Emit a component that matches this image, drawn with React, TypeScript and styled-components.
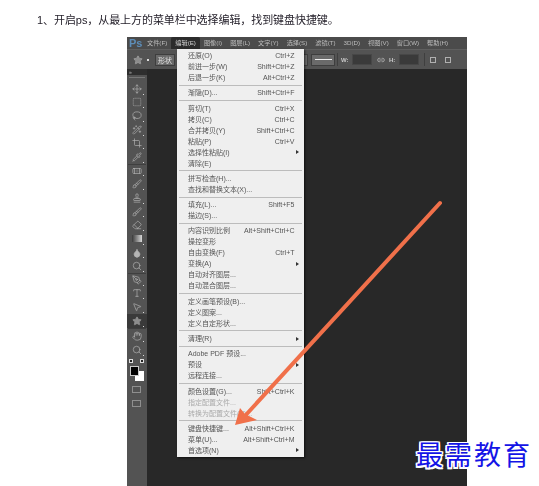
import React from "react";
import styled, { createGlobalStyle } from "styled-components";
import {
  Bandage,
  Brush,
  Crop,
  Droplet,
  Eraser,
  Hand,
  Lasso,
  Link2,
  MousePointer2,
  Move,
  PenTool,
  Pipette,
  Search,
  SquareDashed,
  Stamp,
  Star,
  Wand2,
  Type,
} from "lucide-react";

const GlobalStyle = createGlobalStyle`
  html, body {
    margin: 0;
    padding: 0;
    background: #fff;
  }
`;

const Page = styled.div`
  position: relative;
  width: 539px;
  height: 486px;
  overflow: hidden;
  background: #fff;
  font-family: "Liberation Sans", "Noto Sans CJK SC", sans-serif;
`;

const Caption = styled.p`
  margin: 0;
  height: 37px;
  box-sizing: border-box;
  padding: 13px 0 0 37px;
  font-size: 11px;
  line-height: 14px;
  letter-spacing: -0.07px;
  color: #26222c;
  white-space: nowrap;
  filter: blur(0.25px);
`;

// Photoshop window
const PsWindow = styled.div`
  position: relative;
  width: 340px;
  height: 449px;
  margin-left: 127px;
  background: #282828;
  display: flex;
  flex-direction: column;
  filter: blur(0.4px);
`;

const MenuBar = styled.div`
  height: 12px;
  flex: none;
  display: flex;
  align-items: center;
  background: #4b4b4b;
  font-size: 6.2px;
  white-space: nowrap;
`;

const Logo = styled.span`
  width: 16px;
  flex: none;
  padding-left: 2px;
  box-sizing: border-box;
  font-size: 11px;
  font-weight: bold;
  color: #5d8db8;
`;

const MenuItem = styled.span<{ $active?: boolean }>`
  height: 12px;
  line-height: 12px;
  box-sizing: border-box;
  padding: 0 4px;
  background: ${(p) => (p.$active ? "#2c2c2c" : "transparent")};
  color: ${(p) => (p.$active ? "#d0d0d0" : "#bcbcbc")};
  border-radius: 2px 2px 0 0;
`;

const OptionsBar = styled.div`
  height: 20px;
  flex: none;
  display: flex;
  align-items: center;
  background: #535353;
  border-top: 1px solid #5f5f5f;
  box-sizing: border-box;
  padding-left: 6px;
  color: #c8c8c8;
  font-size: 6px;
`;

const ToolCaret = styled.span`
  width: 2px;
  height: 2px;
  margin: 0 6px 0 4px;
  background: #ddd;
`;

const OptionButton = styled.span<{ $w: number; $ml?: number }>`
  width: ${(p) => p.$w}px;
  height: 12px;
  margin-left: ${(p) => p.$ml ?? 0}px;
  flex: none;
  box-sizing: border-box;
  display: flex;
  align-items: center;
  justify-content: center;
  background: #6a6a6a;
  border: 1px solid #3e3e3e;
  color: #e4e4e4;
  font-size: 7px;
`;

const StrokeLine = styled.span`
  width: 17px;
  height: 1px;
  background: #eee;
`;

const BarDivider = styled.span<{ $ml: number }>`
  width: 1px;
  height: 13px;
  margin-left: ${(p) => p.$ml}px;
  background: #3f3f3f;
`;

const BarLabel = styled.span<{ $ml: number }>`
  margin-left: ${(p) => p.$ml}px;
  width: 8px;
  font-weight: bold;
`;

const NumberInput = styled.span<{ $ml: number }>`
  width: 20px;
  height: 11px;
  margin-left: ${(p) => p.$ml}px;
  background: #3a3a3a;
  border: 1px solid #474747;
  box-sizing: border-box;
`;

const AlignGlyph = styled.span<{ $ml: number }>`
  width: 6px;
  height: 6px;
  margin-left: ${(p) => p.$ml}px;
  border: 1px solid #b0b0b0;
  box-sizing: border-box;
`;

const Workspace = styled.div`
  flex: 1;
  display: flex;
  min-height: 0;
`;

const Toolbox = styled.div`
  width: 20px;
  flex: none;
  display: flex;
  flex-direction: column;
  align-items: stretch;
  background: #535353;
`;

const ToolboxHead = styled.div`
  height: 6px;
  background: #2e2e2e;
  color: #bbb;
  font-size: 5px;
  line-height: 6px;
  padding-left: 2px;
`;

const Grip = styled.div`
  height: 1px;
  margin: 2px 2px 4px;
  background: #777;
`;

const Tool = styled.div<{ $selected?: boolean }>`
  height: 13.65px;
  flex: none;
  display: flex;
  align-items: center;
  justify-content: center;
  color: #b4b4b4;
  background: ${(p) => (p.$selected ? "#3a3a3a" : "transparent")};
  position: relative;
  &::after {
    content: "";
    position: absolute;
    right: 3px;
    bottom: 1px;
    width: 1px;
    height: 1px;
    background: #ddd;
  }
`;

const ToolGroupLine = styled.div<{ $gap?: number }>`
  height: 1px;
  margin: 0 1px ${(p) => p.$gap ?? -1}px;
  background: #3f3f3f;
  flex: none;
`;

const Gradient = styled.span`
  width: 10px;
  height: 7px;
  background: linear-gradient(90deg, #3a3a3a, #d8d8d8);
`;

const MiniSwatches = styled.div`
  height: 9px;
  flex: none;
  display: flex;
  align-items: center;
  justify-content: space-between;
  padding: 0 3px 0 2px;
`;

const MiniSwatch = styled.span`
  width: 4px;
  height: 4px;
  background: #222;
  border: 1px solid #ddd;
  box-sizing: border-box;
`;

const ColorWell = styled.div`
  position: relative;
  height: 15px;
  flex: none;
  margin-bottom: 4px;
`;

const Background = styled.span`
  position: absolute;
  left: 8px;
  top: 5px;
  width: 9px;
  height: 10px;
  background: #fff;
`;

const Foreground = styled.span`
  position: absolute;
  left: 3px;
  top: 0;
  width: 9px;
  height: 10px;
  box-sizing: border-box;
  background: #000;
  border: 1px solid #c8c8c8;
`;

const OutlineIcon = styled.span<{ $mt: number }>`
  width: 9px;
  height: 7px;
  margin: ${(p) => p.$mt}px 0 0 5px;
  border: 1px solid #8f8f8f;
  box-sizing: border-box;
`;

// Edit menu, open over the window
const Menu = styled.div`
  position: absolute;
  left: 50px;
  top: 12px;
  width: 127px;
  box-sizing: border-box;
  padding: 1px 0;
  background: #efefef;
  box-shadow: 1px 1px 2px rgba(0, 0, 0, 0.6);
  font-size: 7px;
`;

const Row = styled.div<{ $off?: boolean }>`
  position: relative;
  height: 11px;
  line-height: 11px;
  padding: 0 9.5px 0 11px;
  display: flex;
  justify-content: space-between;
  white-space: nowrap;
  color: ${(p) => (p.$off ? "#aaaaaa" : "#555555")};
`;

const Sep = styled.div`
  height: 4.3px;
  display: flex;
  align-items: center;
  padding: 0 2px;
  &::before {
    content: "";
    flex: 1;
    height: 1px;
    background: #bcbcbc;
  }
`;

const SubArrow = styled.span`
  position: absolute;
  right: 5px;
  top: 3.5px;
  width: 0;
  height: 0;
  border-left: 3px solid #333;
  border-top: 2px solid transparent;
  border-bottom: 2px solid transparent;
`;

const Arrow = styled.svg`
  position: absolute;
  left: 0;
  top: 0;
  pointer-events: none;
`;

const Watermark = styled.div`
  position: absolute;
  left: 416px;
  top: 436px;
  font-family: "Noto Sans CJK SC", sans-serif;
  font-size: 27px;
  line-height: 36px;
  letter-spacing: 2px;
  color: #1414e6;
  white-space: nowrap;
  text-shadow: 1.5px 0 0 #fff, -1.5px 0 0 #fff, 0 1.5px 0 #fff, 0 -1.5px 0 #fff,
    1.5px 1.5px 0 #fff, -1.5px -1.5px 0 #fff, 1.5px -1.5px 0 #fff,
    -1.5px 1.5px 0 #fff;
`;

const topMenu = ["文件(F)", "编辑(E)", "图像(I)", "图层(L)", "文字(Y)", "选择(S)", "滤镜(T)", "3D(D)", "视图(V)", "窗口(W)", "帮助(H)"];

type Entry = { label: string; key?: string; sub?: boolean; off?: boolean };

const sections: Entry[][] = [
  [
    { label: "还原(O)", key: "Ctrl+Z" },
    { label: "前进一步(W)", key: "Shift+Ctrl+Z" },
    { label: "后退一步(K)", key: "Alt+Ctrl+Z" },
  ],
  [{ label: "渐隐(D)...", key: "Shift+Ctrl+F" }],
  [
    { label: "剪切(T)", key: "Ctrl+X" },
    { label: "拷贝(C)", key: "Ctrl+C" },
    { label: "合并拷贝(Y)", key: "Shift+Ctrl+C" },
    { label: "粘贴(P)", key: "Ctrl+V" },
    { label: "选择性粘贴(I)", sub: true },
    { label: "清除(E)" },
  ],
  [{ label: "拼写检查(H)..." }, { label: "查找和替换文本(X)..." }],
  [{ label: "填充(L)...", key: "Shift+F5" }, { label: "描边(S)..." }],
  [
    { label: "内容识别比例", key: "Alt+Shift+Ctrl+C" },
    { label: "操控变形" },
    { label: "自由变换(F)", key: "Ctrl+T" },
    { label: "变换(A)", sub: true },
    { label: "自动对齐图层..." },
    { label: "自动混合图层..." },
  ],
  [{ label: "定义画笔预设(B)..." }, { label: "定义图案..." }, { label: "定义自定形状..." }],
  [{ label: "清理(R)", sub: true }],
  [{ label: "Adobe PDF 预设..." }, { label: "预设", sub: true }, { label: "远程连接..." }],
  [
    { label: "颜色设置(G)...", key: "Shift+Ctrl+K" },
    { label: "指定配置文件...", off: true },
    { label: "转换为配置文件(V)...", off: true },
  ],
  [
    { label: "键盘快捷键...", key: "Alt+Shift+Ctrl+K" },
    { label: "菜单(U)...", key: "Alt+Shift+Ctrl+M" },
    { label: "首选项(N)", sub: true },
  ],
];

const iconProps = { size: 10, strokeWidth: 1.6 };

export default function App() {
  return (
    <Page>
      <GlobalStyle />
      <Caption>1、开启ps，从最上方的菜单栏中选择编辑，找到键盘快捷键。</Caption>
      <PsWindow>
        <MenuBar>
          <Logo>Ps</Logo>
          {topMenu.map((name) => (
            <MenuItem key={name} $active={name === "编辑(E)"}>
              {name}
            </MenuItem>
          ))}
        </MenuBar>
        <OptionsBar>
          <Star size={10} strokeWidth={1.6} fill="#8c8c8c" color="#a8a8a8" />
          <ToolCaret />
          <OptionButton $w={20}>形状</OptionButton>
          <OptionButton $w={10} $ml={123} />
          <OptionButton $w={24} $ml={3}>
            <StrokeLine />
          </OptionButton>
          <BarDivider $ml={2} />
          <BarLabel $ml={3}>W:</BarLabel>
          <NumberInput $ml={3} />
          <Link2 size={8} style={{ marginLeft: 5 }} />
          <BarLabel $ml={4}>H:</BarLabel>
          <NumberInput $ml={2} />
          <BarDivider $ml={5} />
          <AlignGlyph $ml={5} />
          <AlignGlyph $ml={9} />
        </OptionsBar>
        <Workspace>
          <Toolbox>
            <ToolboxHead>»</ToolboxHead>
            <Grip />
            <Tool><Move {...iconProps} /></Tool>
            <Tool><SquareDashed {...iconProps} /></Tool>
            <Tool><Lasso {...iconProps} /></Tool>
            <Tool><Wand2 {...iconProps} /></Tool>
            <Tool><Crop {...iconProps} /></Tool>
            <Tool><Pipette {...iconProps} /></Tool>
            <ToolGroupLine />
            <Tool><Bandage {...iconProps} /></Tool>
            <Tool><Brush {...iconProps} /></Tool>
            <Tool><Stamp {...iconProps} /></Tool>
            <Tool><Brush {...iconProps} /></Tool>
            <Tool><Eraser {...iconProps} /></Tool>
            <Tool><Gradient /></Tool>
            <Tool><Droplet {...iconProps} fill="#b4b4b4" /></Tool>
            <Tool><Search {...iconProps} /></Tool>
            <ToolGroupLine />
            <Tool><PenTool {...iconProps} /></Tool>
            <Tool><Type {...iconProps} /></Tool>
            <Tool><MousePointer2 {...iconProps} /></Tool>
            <Tool $selected><Star {...iconProps} color="#9a9a9a" fill="#8c8c8c" /></Tool>
            <ToolGroupLine $gap={1} />
            <Tool><Hand {...iconProps} /></Tool>
            <Tool><Search {...iconProps} /></Tool>
            <MiniSwatches>
              <MiniSwatch />
              <MiniSwatch />
            </MiniSwatches>
            <ColorWell>
              <Background />
              <Foreground />
            </ColorWell>
            <OutlineIcon $mt={1} />
            <OutlineIcon $mt={7} />
          </Toolbox>
        </Workspace>
        <Menu>
          {sections.map((rows, i) => (
            <React.Fragment key={i}>
              {i > 0 && <Sep />}
              {rows.map((r) => (
                <Row key={r.label} $off={r.off}>
                  <span>{r.label}</span>
                  {r.key && <span>{r.key}</span>}
                  {r.sub && <SubArrow />}
                </Row>
              ))}
            </React.Fragment>
          ))}
        </Menu>
      </PsWindow>
      <Arrow width="539" height="486" viewBox="0 0 539 486">
        <line x1="440" y1="203" x2="244" y2="417" stroke="#f0704a" strokeWidth="4" strokeLinecap="round" />
        <polygon points="235,425 240,408 245,414 257,420" fill="#f0704a" />
      </Arrow>
      <Watermark>最需教育</Watermark>
    </Page>
  );
}
